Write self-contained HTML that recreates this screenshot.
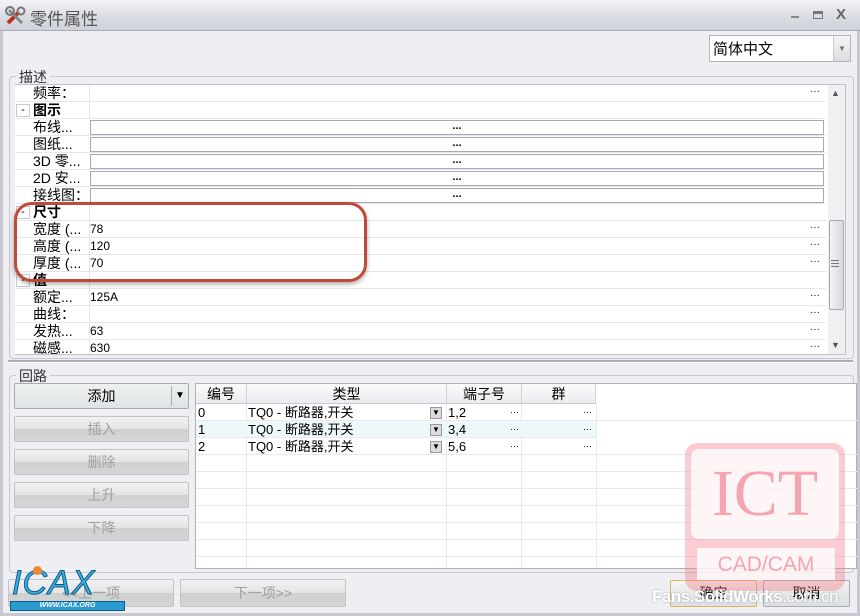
<!DOCTYPE html>
<html><head><meta charset="utf-8"><style>
*{margin:0;padding:0;box-sizing:border-box}
body{width:860px;height:616px;overflow:hidden;background:#eeeef3;font-family:"Liberation Sans","Noto Sans CJK SC",sans-serif;font-size:13px;color:#000;position:relative}
.a{position:absolute}
.row{position:absolute;left:16px;width:811px;height:17px;border-bottom:1px solid #e6e6ee;background:#fff}
.row .l{position:absolute;left:18px;top:0;line-height:17px;font-size:14px}
.row .v{position:absolute;left:75px;top:0;line-height:17px;font-size:12px}
.row .d{position:absolute;right:6px;top:0;line-height:14px;font-size:10px}
.row .sep{position:absolute;left:74px;top:0;bottom:0;border-left:1px solid #e6e6ee}
.row .box{position:absolute;left:75px;right:2px;top:1px;height:15px;border:1px solid #a8a8b8;background:#fff;text-align:center;font-size:11px;line-height:11px;font-weight:bold}
.pm{position:absolute;left:1px;top:2px;width:14px;height:13px;border:1px solid #c8c8d0;background:#fff;font-size:11px;line-height:10px;text-align:center}
.btn{position:absolute;border:1px solid #c4c4c8;border-radius:2px;background:linear-gradient(#f2f2f2 0,#e4e4e4 50%,#cfd0d0 51%,#d6d6d6 100%);text-align:center;color:#a0a0a0;font-size:14px;line-height:24px}
.tr{position:absolute;left:196px;width:661px;height:17px;border-bottom:1px solid #e8e8ee}
.tr span{position:absolute;top:0;line-height:17px;font-size:13px}
.vl{position:absolute;top:404px;height:164px;border-left:1px solid #e8e8ee}
</style></head><body>
<div class="a" style="left:0;top:0;width:860px;height:31px;background:linear-gradient(#f4f4f7,#d9dbe2 60%,#cfd2da);border-bottom:1px solid #a8aab4"></div>
<svg class="a" style="left:5px;top:6px" width="22" height="20" viewBox="0 0 22 20"><path d="M3 17 L14 6" stroke="#c03020" stroke-width="4"/><path d="M4 4 L17 17" stroke="#888" stroke-width="3"/><circle cx="5" cy="5" r="4" fill="none" stroke="#777" stroke-width="2"/><circle cx="16" cy="5" r="3.5" fill="none" stroke="#777" stroke-width="2"/></svg>
<div class="a" style="left:30px;top:5px;font-size:17px;color:#555">零件属性</div>
<div class="a" style="left:791px;top:16px;width:8px;height:2px;background:#888"></div>
<div class="a" style="left:813px;top:11px;width:10px;height:8px;border:1px solid #777;border-top:3px solid #777"></div>
<div class="a" style="left:836px;top:6px;font-size:15px;font-weight:bold;color:#666">X</div>
<div class="a" style="left:0;top:31px;width:3px;height:585px;background:#c8c8d0"></div>
<div class="a" style="left:857px;top:31px;width:3px;height:585px;background:#c8c8d0"></div>
<div class="a" style="left:0;top:613px;width:860px;height:3px;background:#c8c8d0"></div>
<div class="a" style="left:709px;top:35px;width:142px;height:27px;border:1px solid #b4b4bc;background:#fff"></div>
<div class="a" style="left:833px;top:36px;width:17px;height:25px;background:linear-gradient(#f6f6f6,#dcdcdc);border-left:1px solid #c8c8d0;font-size:8px;color:#777;text-align:center;line-height:25px">▼</div>
<div class="a" style="left:713px;top:38px;font-size:15px">简体中文</div>
<div class="a" style="left:9px;top:76px;width:845px;height:283px;border:1px solid #c8c8d0;border-radius:4px"></div>
<div class="a" style="left:16px;top:67px;background:#eeeef3;padding:0 3px;font-size:14px;color:#333">描述</div>
<div class="a" style="left:15px;top:84px;width:831px;height:271px;border:1px solid #c0c0c8;background:#fff;overflow:hidden"></div>
<div class="a" style="left:15px;top:84px;width:813px;height:270px;overflow:hidden">
<div style="position:relative;left:-16px;top:-84px">
<div class="row" style="top:85px"><div class="sep"></div><div class="l">频率：</div><div class="d">···</div></div>
<div class="row" style="top:102px"><div class="pm">-</div><div class="sep"></div><div class="l" style="font-weight:bold;font-size:14px">图示</div></div>
<div class="row" style="top:119px"><div class="l">布线...</div><div class="box">...</div></div>
<div class="row" style="top:136px"><div class="l">图纸...</div><div class="box">...</div></div>
<div class="row" style="top:153px"><div class="l">3D 零...</div><div class="box">...</div></div>
<div class="row" style="top:170px"><div class="l">2D 安...</div><div class="box">...</div></div>
<div class="row" style="top:187px"><div class="l">接线图：</div><div class="box">...</div></div>
<div class="row" style="top:204px"><div class="pm">-</div><div class="sep"></div><div class="l" style="font-weight:bold;font-size:14px">尺寸</div></div>
<div class="row" style="top:221px"><div class="sep"></div><div class="l">宽度 (...</div><div class="v">78</div><div class="d">···</div></div>
<div class="row" style="top:238px"><div class="sep"></div><div class="l">高度 (...</div><div class="v">120</div><div class="d">···</div></div>
<div class="row" style="top:255px"><div class="sep"></div><div class="l">厚度 (...</div><div class="v">70</div><div class="d">···</div></div>
<div class="row" style="top:272px"><div class="pm">-</div><div class="sep"></div><div class="l" style="font-weight:bold;font-size:14px">值</div></div>
<div class="row" style="top:289px"><div class="sep"></div><div class="l">额定...</div><div class="v">125A</div><div class="d">···</div></div>
<div class="row" style="top:306px"><div class="sep"></div><div class="l">曲线：</div><div class="d">···</div></div>
<div class="row" style="top:323px"><div class="sep"></div><div class="l">发热...</div><div class="v">63</div><div class="d">···</div></div>
<div class="row" style="top:340px"><div class="sep"></div><div class="l">磁感...</div><div class="v">630</div><div class="d">···</div></div>
</div></div>
<div class="a" style="left:828px;top:85px;width:17px;height:269px;background:#f0f0f2"></div>
<div class="a" style="left:831px;top:88px;font-size:9px;color:#555">▲</div>
<div class="a" style="left:831px;top:340px;font-size:9px;color:#555">▼</div>
<div class="a" style="left:829px;top:220px;width:15px;height:90px;border:1px solid #a8a8b0;border-radius:2px;background:linear-gradient(90deg,#f4f4f4,#d8d8dc)"></div>
<div class="a" style="left:831px;top:260px;width:8px;height:7px;border-top:1px solid #777;border-bottom:1px solid #777"><div style="margin-top:2px;border-top:1px solid #777"></div></div>
<div class="a" style="left:14px;top:202px;width:353px;height:80px;border:3px solid #c04a35;border-radius:18px;box-shadow:0 2px 5px rgba(0,0,0,.35)"></div>
<div class="a" style="left:8px;top:360px;width:845px;height:3px;background:#a8acb8;border-bottom:1px solid #fff"></div>
<div class="a" style="left:9px;top:375px;width:845px;height:198px;border:1px solid #c8c8d0;border-radius:4px"></div>
<div class="a" style="left:16px;top:366px;background:#eeeef3;padding:0 3px;font-size:14px;color:#333">回路</div>
<div class="btn" style="left:14px;top:383px;width:175px;height:26px;color:#000;border-color:#a8acb4;background:linear-gradient(#f0f2f2,#dfe3e3)">添加<span style="position:absolute;right:0;top:2px;width:17px;height:20px;border-left:1px solid #a8acb4;font-size:10px;line-height:20px">▼</span></div>
<div class="btn" style="left:14px;top:416px;width:175px;height:26px">插入</div>
<div class="btn" style="left:14px;top:449px;width:175px;height:26px">删除</div>
<div class="btn" style="left:14px;top:482px;width:175px;height:26px">上升</div>
<div class="btn" style="left:14px;top:515px;width:175px;height:26px">下降</div>
<div class="a" style="left:195px;top:383px;width:662px;height:186px;border:1px solid #b0b0b8;background:#fff"></div>
<div class="a" style="left:196px;top:384px;width:400px;height:20px;background:linear-gradient(#fbfbfb,#ececf0);border-bottom:1px solid #c8c8d0"></div>
<div class="a" style="left:196px;top:384px;width:50px;text-align:center;line-height:20px;font-size:14px">编号</div>
<div class="a" style="left:246px;top:384px;width:200px;text-align:center;line-height:20px;font-size:14px;border-left:1px solid #d0d0d8">类型</div>
<div class="a" style="left:446px;top:384px;width:75px;text-align:center;line-height:20px;font-size:14px;border-left:1px solid #d0d0d8">端子号</div>
<div class="a" style="left:521px;top:384px;width:75px;text-align:center;line-height:20px;font-size:14px;border-left:1px solid #d0d0d8;border-right:1px solid #d0d0d8">群</div>
<div class="vl" style="left:246px"></div><div class="vl" style="left:446px"></div><div class="vl" style="left:521px"></div><div class="vl" style="left:596px"></div>
<div class="tr" style="top:404px"><span style="left:2px">0</span><span style="left:52px">TQ0 - 断路器,开关</span><span style="left:234px;top:3px;width:12px;height:12px;background:#ddd;border:1px solid #999;font-size:8px;line-height:10px;text-align:center">▼</span><span style="left:252px">1,2</span><span style="left:314px;font-size:9px">···</span><span style="left:387px;font-size:9px">···</span></div>
<div class="tr" style="top:421px;background:#eef8fa;width:400px"><span style="left:2px">1</span><span style="left:52px">TQ0 - 断路器,开关</span><span style="left:234px;top:3px;width:12px;height:12px;background:#ddd;border:1px solid #999;font-size:8px;line-height:10px;text-align:center">▼</span><span style="left:252px">3,4</span><span style="left:314px;font-size:9px">···</span><span style="left:387px;font-size:9px">···</span></div>
<div class="tr" style="top:438px"><span style="left:2px">2</span><span style="left:52px">TQ0 - 断路器,开关</span><span style="left:234px;top:3px;width:12px;height:12px;background:#ddd;border:1px solid #999;font-size:8px;line-height:10px;text-align:center">▼</span><span style="left:252px">5,6</span><span style="left:314px;font-size:9px">···</span><span style="left:387px;font-size:9px">···</span></div>
<div class="tr" style="top:455px"></div><div class="tr" style="top:472px"></div><div class="tr" style="top:489px"></div><div class="tr" style="top:506px"></div><div class="tr" style="top:523px"></div><div class="tr" style="top:540px"></div>
<div class="btn" style="left:8px;top:579px;width:166px;height:28px;line-height:26px">&lt;&lt;上一项</div>
<div class="btn" style="left:180px;top:579px;width:166px;height:28px;line-height:26px">下一项&gt;&gt;</div>
<div class="btn" style="left:670px;top:580px;width:87px;height:27px;color:#000;border-color:#d8b860;background:linear-gradient(#f4f5f5,#dde0e0)">确定</div>
<div class="btn" style="left:763px;top:580px;width:87px;height:27px;color:#000;border-color:#a8acb4;background:linear-gradient(#f0f2f2,#dde0e0)">取消</div>
<div class="a" style="left:685px;top:443px;width:160px;height:148px;border-radius:12px;background:rgba(245,120,135,.38)"></div>
<div class="a" style="left:691px;top:449px;width:148px;height:90px;border-radius:8px;background:rgba(255,255,255,.8)"></div>
<div class="a" style="left:691px;top:449px;width:148px;text-align:center;font-family:'Liberation Serif',serif;font-size:66px;line-height:90px;color:#f5a5b0">ICT</div>
<div class="a" style="left:697px;top:548px;width:138px;height:32px;background:rgba(255,255,255,.8);text-align:center;font-size:21px;line-height:34px;color:#f5a5b0">CAD/CAM</div>
<div class="a" style="left:652px;top:587px;font-size:17px;font-weight:bold;color:#fff;letter-spacing:-0.5px;text-shadow:0 0 2px rgba(0,0,0,.3)">Fans.SolidWorks<span style="font-weight:normal">.com.cn</span></div>
<div class="a" style="left:10px;top:601px;width:115px;height:10px;background:#2a9bd0;border:1px solid #0d5c8a;font-size:7px;font-weight:bold;color:#fff;text-align:center;line-height:8px;font-style:italic">WWW.ICAX.ORG</div>
<div class="a" style="left:12px;top:565px;font-size:34px;font-style:italic;color:#3ab0e0;font-family:'Liberation Sans',sans-serif;letter-spacing:1px;line-height:36px;-webkit-text-stroke:1px #0d5c8a">ICAX</div>
<div class="a" style="left:33px;top:566px;width:9px;height:9px;border-radius:50%;background:#f08a30"></div>
</body></html>
